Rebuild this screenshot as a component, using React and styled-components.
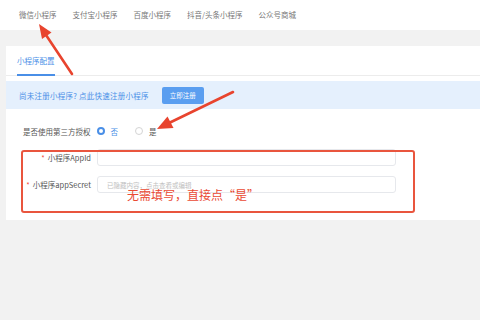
import styled, { createGlobalStyle } from 'styled-components'

const GlobalStyle = createGlobalStyle`
    html, body {
        margin:0;
        padding:0;
        background:#f2f2f2;
        font-family:"Noto Sans CJK SC", "Noto Sans", sans-serif;
    }
`

const Page = styled.div`
    position:relative;
    width:480px;
    height:320px;
    overflow:hidden;
`

const TopTabs = styled.nav`
    height:29px;
    padding-bottom:1px;
    background:#fff;
    display:flex;
    align-items:center;
    gap:16px;
    padding-left:19px;
`

const TopTab = styled.span`
    font-size:7.5px;
    color:#777;
    white-space:nowrap;
`

const Content = styled.div`
    padding:16px 0 0 6px;
`

const Card = styled.section`
    position:relative;
    background:#fff;
    height:174px;
    box-sizing:border-box;
`

const CardTabs = styled.div`
    height:30px;
    box-sizing:border-box;
    border-bottom:1px solid #ececec;
    display:flex;
    padding-left:11px;
`

const CardTab = styled.div`
    display:flex;
    align-items:center;
    font-size:7.5px;
    color:${p => p.active ? '#4a8fe7' : '#666'};
    border-bottom:2px solid ${p => p.active ? '#4a8fe7' : 'transparent'};
    margin-bottom:-1px;
`

const Notice = styled.div`
    margin-top:5px;
    height:28px;
    background:#e5f0fd;
    display:flex;
    align-items:center;
    padding-left:13px;
    gap:13px;
`

const NoticeText = styled.span`
    font-size:7.5px;
    letter-spacing:0.25px;
    color:#4a8fe7;
`

const PrimaryButton = styled.button`
    width:42px;
    height:17px;
    border:none;
    border-radius:2px;
    background:#5a9ef0;
    color:#fff;
    font-family:inherit;
    font-size:6.5px;
    padding:0;
`

const RadioRow = styled.div`
    margin-top:15px;
    height:14px;
    display:flex;
    align-items:center;
    padding-left:17px;
`

const RadioLabel = styled.span`
    font-size:7.5px;
    color:#555;
    margin-right:6px;
`

const RadioOption = styled.label`
    display:flex;
    align-items:center;
    gap:6px;
    font-size:7.5px;
    color:${p => p.checked ? '#4a8fe7' : '#555'};
    margin-right:17px;
`

const RadioDot = styled.span`
    width:8px;
    height:8px;
    box-sizing:border-box;
    border-radius:50%;
    border:${p => p.checked ? '2.5px solid #4a8fe7' : '1px solid #d4d4d4'};
    background:#fff;
`

const Form = styled.div`
    margin-top:11px;
    display:flex;
    flex-direction:column;
    gap:10px;
`

const FormRow = styled.div`
    display:flex;
    align-items:center;
`

const FieldLabel = styled.span`
    width:85px;
    text-align:right;
    font-size:7.5px;
    color:#555;
    margin-right:6px;
    white-space:nowrap;
`

const Star = styled.span`
    color:#f04a3a;
    margin-right:3px;
`

const Input = styled.div`
    width:299px;
    height:17px;
    box-sizing:border-box;
    border:1px solid #e6e8ec;
    border-radius:3px;
    display:flex;
    align-items:center;
    padding-left:9px;
    font-size:6.5px;
    color:#c0c0c0;
`

const Highlight = styled.div`
    position:absolute;
    left:15px;
    top:104px;
    width:394px;
    height:63px;
    box-sizing:border-box;
    border:2px solid #e9553e;
    border-radius:3px;
    pointer-events:none;
`

const Note = styled.div`
    position:absolute;
    left:121px;
    top:140px;
    font-size:12px;
    color:#ea4a33;
    white-space:nowrap;
`

const Arrows = styled.svg`
    position:absolute;
    left:0;
    top:0;
    pointer-events:none;
`

const tabs = ['微信小程序', '支付宝小程序', '百度小程序', '抖音/头条小程序', '公众号商城']

export default function App() {
    return (
        <Page>
            <GlobalStyle />
            <TopTabs>
                {tabs.map(t => <TopTab key={t}>{t}</TopTab>)}
            </TopTabs>
            <Content>
                <Card>
                    <CardTabs>
                        <CardTab active>小程序配置</CardTab>
                    </CardTabs>
                    <Notice>
                        <NoticeText>尚未注册小程序? 点此快速注册小程序</NoticeText>
                        <PrimaryButton>立即注册</PrimaryButton>
                    </Notice>
                    <RadioRow>
                        <RadioLabel>是否使用第三方授权</RadioLabel>
                        <RadioOption checked><RadioDot checked />否</RadioOption>
                        <RadioOption><RadioDot />是</RadioOption>
                    </RadioRow>
                    <Form>
                        <FormRow>
                            <FieldLabel><Star>*</Star>小程序AppId</FieldLabel>
                            <Input />
                        </FormRow>
                        <FormRow>
                            <FieldLabel><Star>*</Star>小程序appSecret</FieldLabel>
                            <Input>已隐藏内容，点击查看或编辑</Input>
                        </FormRow>
                    </Form>
                    <Highlight />
                    <Note>无需填写，直接点“是”</Note>
                </Card>
            </Content>
            <Arrows width="480" height="320" viewBox="0 0 480 320">
                <line x1="72" y1="74" x2="46" y2="35" stroke="#e8442e" strokeWidth="2.6" strokeLinecap="round" />
                <polygon points="39,24 51.5,32.5 42,39" fill="#e8442e" />
                <line x1="233" y1="92" x2="169" y2="123" stroke="#e8442e" strokeWidth="2.6" strokeLinecap="round" />
                <polygon points="157,129 167.5,116.5 173.5,128" fill="#e8442e" />
            </Arrows>
        </Page>
    )
}
